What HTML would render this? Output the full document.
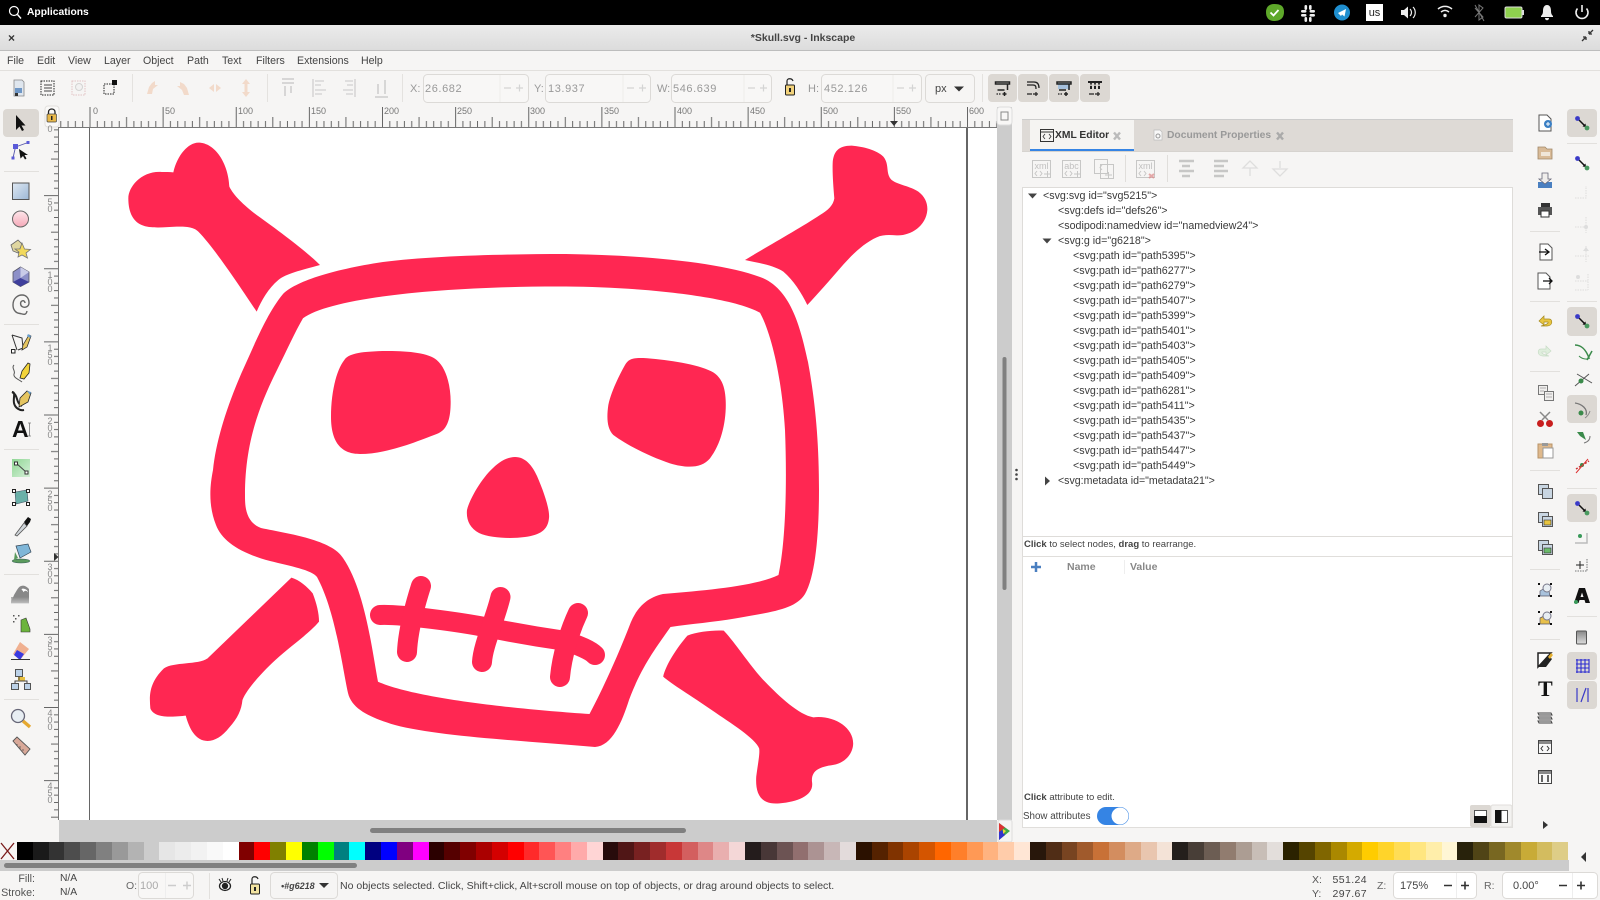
<!DOCTYPE html>
<html style="background:#f6f5f4"><head><meta charset="utf-8"><title>Skull.svg - Inkscape</title>
<style>
html,body{margin:0;padding:0;width:1600px;height:900px;overflow:hidden;background:#f6f5f4;font-family:"Liberation Sans",sans-serif;color:#333}
body{filter:blur(.35px)}
#bg{position:absolute;left:0;top:0}
.t{position:absolute;white-space:nowrap;font-size:11px;line-height:14px;height:14px}
.m{color:#444;font-size:10.6px}
.x{font-size:10.7px;color:#3a3a3a}
.g{color:#999}
.n{letter-spacing:.6px}
.r{font-size:9px;color:#777;line-height:10px;height:10px}
.v{font-size:9px;color:#888;line-height:8px;height:8px;width:8px;text-align:center}
#swatches i{display:block;height:18px;flex:none;width:15.84px}
</style></head><body>
<svg id="bg" width="1600" height="900" viewBox="0 0 1600 900" xmlns="http://www.w3.org/2000/svg">
<defs>
<linearGradient id="title" x1="0" y1="0" x2="0" y2="1"><stop offset="0" stop-color="#ebebeb"/><stop offset="1" stop-color="#dcdcdc"/></linearGradient>
<linearGradient id="gb" x1="0" y1="0" x2="1" y2="1"><stop offset="0" stop-color="#dfe8f2"/><stop offset="1" stop-color="#9db8d6"/></linearGradient>
<linearGradient id="gp" x1="0" y1="0" x2="0" y2="1"><stop offset="0" stop-color="#fde6ea"/><stop offset="1" stop-color="#f5a9b8"/></linearGradient>
<linearGradient id="gw" x1="0" y1="0" x2="0" y2="1"><stop offset="0" stop-color="#888"/><stop offset="1" stop-color="#ddd"/></linearGradient>
<linearGradient id="gr" x1="0" y1="0" x2="1" y2="1"><stop offset="0" stop-color="#8fd694"/><stop offset="1" stop-color="#d6f0d8"/></linearGradient>
<pattern id="hr" patternUnits="userSpaceOnUse" x="89.5" y="107" width="73.125" height="20">
<path d="M.5 0V20M7.8 14V20M15.1 14V20M22.4 14V20M29.75 14V20M37.06 10V20M44.4 14V20M51.7 14V20M59 14V20M66.3 14V20" stroke="#666" stroke-width="1" fill="none"/></pattern>
<pattern id="vr" patternUnits="userSpaceOnUse" x="44" y="122" width="15" height="73.125">
<path d="M0 .5H15M10 7.8H15M10 15.1H15M10 22.4H15M10 29.75H15M7 37.06H15M10 44.4H15M10 51.7H15M10 59H15M10 66.3H15" stroke="#666" stroke-width="1" fill="none"/></pattern>
<g id="snap"><path d="M-4.5-4.5L3 3" stroke="#111" stroke-width="1.5"/><path d="M4 4L.5 3.5 3.5.5Z" fill="#111"/><circle cx="-4.5" cy="-4.5" r="2.4" fill="#3a3ac8"/><circle cx="5" cy="5" r="2.4" fill="#4a9a60"/></g>
<g id="arr2"><path d="M-5 3L2 3M-7-5H7V-3H-7ZM5-3V3" stroke="#222" stroke-width="1.5" fill="none"/><path d="M0 7H4M2 5V9M5 7" stroke="#222" stroke-width="1.5"/><path d="M-6 7H-1" stroke="#222" stroke-width="1.2" stroke-dasharray="1.5 1"/></g>
<g id="file"><path d="M-6-8H2L6-4V8H-6Z" fill="#fff" stroke="#555"/></g>
</defs>

<!-- chrome -->
<rect width="1600" height="25" fill="#000"/>
<rect y="25" width="1600" height="25" fill="url(#title)"/>
<rect y="50" width="1600" height="1" fill="#bdbdbd"/>
<rect y="51" width="1600" height="19" fill="#f6f5f4"/>
<rect y="70" width="1600" height="1" fill="#e2e0dd"/>

<!-- tray -->
<g fill="none" stroke="#fff">
<circle cx="14" cy="11" r="4.5" stroke-width="1.2"/><path d="M17.5 14.5L21 18.5" stroke-width="1.4"/>
</g>
<path d="M1274 4C1281 4 1284 6 1284 12C1284 19 1279 21 1274 21C1269 21 1266 18 1266 12C1266 7 1269 4 1274 4Z" fill="#5ea82a"/>
<path d="M1270.5 12.5L1273.5 15.5 1278.5 10" stroke="#fff" stroke-width="1.8" fill="none"/>
<g fill="#eee"><rect x="1301" y="10" width="5.500" height="2.6" rx="1.2"/><rect x="1309.500" y="10" width="5.500" height="2.6" rx="1.2"/><rect x="1301" y="14" width="5.500" height="2.6" rx="1.2"/><rect x="1309.500" y="14" width="5.500" height="2.6" rx="1.2"/><rect x="1304.5" y="5" width="2.6" height="5" rx="1.2"/><rect x="1309" y="5" width="2.6" height="5" rx="1.2"/><rect x="1304.5" y="17" width="2.6" height="5" rx="1.2"/><rect x="1309" y="17" width="2.6" height="5" rx="1.2"/></g>
<circle cx="1342" cy="12.5" r="8" fill="#1f8fd0"/><path d="M1338 13L1346 9 1344.5 16.5 1342 14.5 1341 16Z" fill="#fff"/>
<rect x="1366" y="4" width="17" height="17" fill="#fff"/>
<path d="M1401 10H1404L1408 6.5V18.5L1404 15H1401Z" fill="#eee"/><path d="M1410 9C1412 11 1412 14 1410 16M1413 7C1416 10 1416 15 1413 18" stroke="#eee" stroke-width="1.2" fill="none"/>
<path d="M1438 9C1442 5.5 1448 5.5 1452 9M1441 12C1443.5 10 1446.5 10 1449 12" stroke="#eee" stroke-width="1.5" fill="none"/><circle cx="1445" cy="15.5" r="1.7" fill="#eee"/>
<path d="M1475 8L1483 17 1479 20V5L1483 8 1475 17M1475 5L1484 21" stroke="#777" stroke-width="1" fill="none"/>
<rect x="1505" y="7" width="17" height="11" rx="1.5" fill="#8fd14f" stroke="#ddd"/><rect x="1522" y="10" width="2" height="5" fill="#ddd"/>
<path d="M1547 5C1550 5 1551 8 1551 11C1551 14 1552 15 1553 16V17H1541V16C1542 15 1543 14 1543 11C1543 8 1544 5 1547 5ZM1545 18H1549C1549 21 1545 21 1545 18Z" fill="#eee"/>
<path d="M1577.5 8.500A6 6 0 1 0 1586.500 8.500" stroke="#eee" stroke-width="1.6" fill="none"/><path d="M1582 5V12" stroke="#eee" stroke-width="1.6"/>
<path d="M1589 34L1593 30M1589 34V31M1589 34H1592M1586 37L1582 41M1586 37V40M1586 37H1583" stroke="#333" stroke-width="1.3" fill="none"/>

<!-- inputs -->
<g fill="#f8f7f6" stroke="#dcdad7">
<rect x="423.500" y="74.500" width="105" height="28" rx="4"/><rect x="545.500" y="74.500" width="105" height="28" rx="4"/><rect x="671.500" y="74.500" width="100" height="28" rx="4"/><rect x="821.500" y="74.500" width="100" height="28" rx="4"/><rect x="925.500" y="74.500" width="49" height="28" rx="4" fill="#f6f5f4"/>
</g>
<path d="M500 75V102M623 75V102M744 75V102M893 75V102" stroke="#eeecea"/>
<path d="M504 88H511M516 88H523M519.500 84.500V91.500M627 88H634M639 88H646M642.500 84.500V91.500M748 88H755M760 88H767M763.500 84.500V91.500M897 88H904M909 88H916M912.500 84.500V91.500" stroke="#d4d4d4" stroke-width="1.2"/>
<path d="M954 86.500H964L959 91.500Z" fill="#333"/>
<path d="M132.500 74V102M267.500 74V102M402.500 74V102M982.500 74V102" stroke="#e4e2df"/>
<!-- toolbar icons -->
<g transform="translate(19 88)"><path d="M-5-8H3L5-6V8H-5Z" fill="#dfe6ee" stroke="#888" stroke-width=".8"/><rect x="-4" y="0" width="7" height="5" fill="#6f97c6"/><rect x="-4" y="5" width="3" height="3" fill="#333"/></g>
<g transform="translate(48 88)"><rect x="-7" y="-7" width="13" height="14" fill="none" stroke="#222" stroke-dasharray="1.5 1"/><path d="M-4-3H4M-4 0H4M-4 3H4" stroke="#444"/></g>
<g transform="translate(79 88)" opacity=".45"><rect x="-7" y="-7" width="13" height="14" fill="none" stroke="#c88" stroke-dasharray="1.5 1"/><circle cx="0" cy="-1" r="3.500" fill="#eee" stroke="#aaa"/></g>
<g transform="translate(110 88)"><rect x="-6" y="-4" width="10" height="10" fill="none" stroke="#222" stroke-dasharray="1.5 1"/><rect x="2" y="-8" width="5" height="5" fill="#111"/></g>
<g opacity=".28" fill="#e8985f"><path d="M147 94L149 87 152 83 155 81V85L158 85 153 89 152 94Z"/><path d="M189 95L187 88 184 84 180 82V86L177 86 182 90 184 95Z"/><path d="M209 88L214 84V92ZM221 88L216 84V92Z"/><path d="M246 79L242 84H250ZM246 97L242 92H250ZM244.500 84H247.500V92H244.500Z"/></g>
<g opacity=".4" stroke="#aaa" stroke-width="2" fill="none"><path d="M282 79H294M282 83H294M285 86V96M291 86V93"/><path d="M313 79V97M315 81H324M315 85H321M315 90H326M315 94H322" stroke-width="1.6"/><path d="M355 79V97M345 81H353M347 85H353M343 90H353M346 94H353" stroke-width="1.6"/><path d="M375 97H388M378 84V94M385 80V94"/></g>
<g transform="translate(790 88)"><path d="M-3-3V-7C-3-10 2-10 3-7" stroke="#222" stroke-width="1.2" fill="none"/><rect x="-4.500" y="-3" width="9" height="10" rx="1" fill="#f2d27a" stroke="#222"/><rect x="-1" y="0" width="2" height="4" fill="#222"/></g>
<g fill="#dcd8d3"><rect x="988" y="74" width="29" height="28" rx="4"/><rect x="1018" y="74" width="30" height="28" rx="4"/><rect x="1049" y="74" width="30" height="28" rx="4"/><rect x="1080" y="74" width="30" height="28" rx="4"/></g>
<use href="#arr2" x="1002.500" y="87"/><g transform="translate(1033 87)"><path d="M-6-5H1C5-5 6-2 6 1M-6-2H0C3-2 3 0 3 2" stroke="#222" stroke-width="1.3" fill="none"/><path d="M-6 7H-1M0 7H5M3 5V9" stroke="#222" stroke-width="1.2"/></g>
<g transform="translate(1064 87)"><rect x="-6" y="-4" width="12" height="6" fill="#a5c0dc"/><use href="#arr2"/></g>
<g transform="translate(1095 87)" fill="#222"><path d="M-7-6H7V-4H-7Z"/><path d="M-5-4H-3L-4-1ZM-1-4H1L0-1ZM3-4H5L4-1Z"/><rect x="-5" y="-1" width="2" height="3"/><rect x="-1" y="-1" width="2" height="3"/><rect x="3" y="-1" width="2" height="3"/><path d="M-6 7H-1M0 7H5M3 5V9" stroke="#222" stroke-width="1.2"/></g>

<!-- rulers -->
<rect x="44" y="106" width="953" height="21" fill="#f6f5f4"/>
<rect x="59" y="107" width="938" height="20" fill="url(#hr)"/>
<rect x="44" y="127" width="15" height="693" fill="url(#vr)"/>
<rect x="59" y="127" width="938" height="1" fill="#777"/>
<rect x="58" y="127" width="1" height="693" fill="#777"/>
<rect x="45" y="106" width="14" height="21" rx="3" fill="#faf9f8" stroke="#e2e0dd"/>
<path d="M48.500 114V112C48.500 108 55 108 55 112V114" stroke="#222" stroke-width="1.300" fill="none"/><rect x="47" y="114" width="9.500" height="8" rx="1" fill="#e8b84a" stroke="#444" stroke-width=".7"/><rect x="51" y="116" width="1.500" height="4" fill="#222"/>
<path d="M890 121H898L894 126Z" fill="#333"/><path d="M54 553V561L58.500 557Z" fill="#333"/>

<!-- canvas -->
<rect x="59" y="128" width="938" height="692" fill="#fff"/>
<rect x="89" y="128" width="1" height="692" fill="#666"/>
<rect x="966" y="128" width="2" height="692" fill="#666"/>

<!-- skull -->
<g fill="#ff2752">
<path fill-rule="evenodd" d="M566 254C640 255 720 262 760 277C790 288 800 325 808 362C815 400 819 440 819 490C819 530 816 575 805 594C795 610 770 612 735 618.500C715 622 690 624 670.500 627C658 645 642 665 629 700C622 722 612 746 595 747C530 741 440 737 395 725C372 718 352 710 348 693C342 665 335 610 317 577C312 570 290 566 270 561C240 553 222 541 216 525C208 505 210 485 213 470C216 440 228 402 246 363C256 341 268 312 283 294C295 282 330 270 383 262C430 256 500 254 566 254Z
M566 286.500C640 287 730 296 760 312.700C772 335 782 380 785 430C787 480 786 540 778.500 575C755 586 710 590 663 594C645 598 635 610 629 627C620 650 605 685 589.500 714C530 710 420 700 378 681.700C372 650 365 590 343 558C332 540 290 534 261 528C245 522 245 505 245 495C245 445 258 408 277 370C287 350 295 332 303 318.300C330 298 440 286 566 286.500Z"/>
<path d="M515 457C525 457 532 465 537 476C544 492 550 510 549 518C548 530 540 535 525 537C510 539 490 538 479 533C470 528 466 520 467 510C470 498 482 478 493 468C500 461 508 457 515 457Z"/>
<g transform="translate(100 130) scale(.33333)">
<path d="M733 690C745 672 775 665 850 663C920 662 985 668 1010 690C1040 715 1052 770 1052 815C1052 860 1045 900 1010 912C950 935 860 972 780 972C730 972 693 945 693 860C693 790 708 722 733 690Z"/>
<path d="M220 127C232 75 265 38 295 38C345 38 385 100 388 170C400 195 430 225 470 255C540 305 620 365 660 405C600 422 560 430 535 450C505 475 485 510 470 545C420 470 340 350 295 305C280 290 255 290 230 290C190 292 150 296 125 285C95 272 85 240 85 205C85 170 125 122 185 126C197 126 210 126 220 127Z"/>
</g>
<g transform="translate(500 130) scale(.33333)">
<path d="M375 705C385 687 400 683 430 684C490 688 580 700 625 720C665 735 675 770 677 810C680 870 665 940 630 985C605 1015 560 1015 510 1000C450 980 380 945 340 915C320 895 320 860 325 825C332 790 355 740 375 705Z"/>
<path d="M735 390C800 350 900 295 960 255C985 240 1000 225 1003 205C1000 170 997 130 998 100C1000 65 1015 47 1055 47C1090 50 1130 60 1150 80C1170 105 1155 130 1175 150C1195 165 1230 168 1255 185C1275 200 1283 220 1282 240C1278 290 1230 318 1190 316C1170 315 1150 313 1130 322C1090 340 1055 375 1020 415C990 450 950 495 922 525C905 490 880 450 850 425C820 405 770 398 735 390Z"/>
</g>
<g transform="translate(130 470) scale(.4847 .33333)">
<path d="M333 323C350 330 365 350 377 370C385 400 390 430 390 455C370 490 330 530 300 570C270 610 240 660 232 690C230 720 222 745 205 772C190 800 175 812 160 813C135 813 122 775 115 737C95 740 50 748 42 715C40 680 38 640 70 595C90 575 140 585 160 565Z"/>
<path d="M1150 497C1170 485 1205 480 1225 482C1250 520 1280 590 1310 635C1340 680 1380 735 1410 742C1450 735 1492 770 1492 820C1492 850 1475 880 1450 885C1425 890 1405 900 1407 935C1412 975 1380 995 1340 1000C1300 1005 1290 970 1292 920C1295 885 1300 850 1298 835C1290 805 1240 760 1200 720C1160 680 1115 640 1100 620C1105 585 1130 530 1150 497Z"/>
</g>
<g fill="none" stroke="#ff2752" stroke-linecap="round" stroke-width="20">
<path d="M380 615C400 614 460 622 490 628C520 634 545 638 566 641C580 646 590 650 595 655"/>
<path d="M421 586C415 605 408 630 407 652"/>
<path d="M500.500 597C495 620 483 645 482 662"/>
<path d="M578 613C570 630 562 655 560 677"/>
</g>
</g>

<!-- scrollbars -->
<rect x="997" y="107" width="15" height="713" fill="#ccc"/>
<rect x="997" y="107" width="15" height="18" rx="3" fill="#f8f7f6" stroke="#ddd"/>
<rect x="1001" y="112" width="7" height="8" fill="none" stroke="#888"/>
<rect x="1002.500" y="357" width="4" height="233" rx="2" fill="#808080"/>
<rect x="59" y="820" width="938" height="22" fill="#ccc"/>
<rect x="370" y="828" width="316" height="5" rx="2.500" fill="#808080"/>
<rect x="998" y="820" width="14" height="22" rx="2" fill="#f6f5f4" stroke="#ddd"/>
<path d="M999 823L1010 831 999 840Z" fill="#3fa84a"/><path d="M999 823L1005 827.500 999 832Z" fill="#d33"/><path d="M999 840L1005 835 1002 830 999 832Z" fill="#33c"/><path d="M1003 829L1006 831 1003 834Z" fill="#f2d33a"/>

<!-- left tools -->
<rect x="3" y="109" width="36" height="28" rx="4" fill="#dcd8d3"/>
<path d="M16 115V130L19.500 126.500 22 131 24 130 21.500 125.500 25.500 125.500Z" fill="#111"/>
<path d="M15.500 147L28 142.500M15.500 147L13 158" stroke="#55a" stroke-width=".9"/><g fill="#5a5ad8"><rect x="26.500" y="141" width="3" height="3"/><rect x="13" y="144" width="5" height="5"/><rect x="11.500" y="156.500" width="3" height="3"/></g>
<path d="M19 149L28 155 24.500 155 26.500 158.500 25 159.500 23 156 20.500 158.500Z" fill="#111"/>
<path d="M4 171.500H39M4 324.500H39M4 449.500H39M4 574.500H39M4 699.500H39" stroke="#e2e0dd"/>
<rect x="12.500" y="183" width="16.500" height="16.500" fill="url(#gb)" stroke="#555" stroke-width="1"/>
<circle cx="20.500" cy="219" r="8" fill="url(#gp)" stroke="#666"/>
<path d="M11 245L18 240 22 244 18 253 13 251Z" fill="#dfd6a0" stroke="#666" stroke-width=".8"/><path d="M22 243L24.500 249 30.500 249.500 26 253 27.500 258 22 255 18 257 19 252 15 249 20 249Z" fill="#f2d95c" stroke="#777" stroke-width=".8"/>
<path d="M20.500 267L29 272V282L20.500 286.500 13 282V272Z" fill="#8d90c8" stroke="#556" stroke-width=".8"/><path d="M20.500 278L29 282 20.500 286.500 13 282Z" fill="#3f3f9c"/><path d="M20.500 267L29 272 20.500 278Z" fill="#c9cbe8"/>
<path d="M27 311C26 316 23 314 20 313.500C15 313 13 309 13 305C13 298 18 295 22 295C27 295 29 299 29 303C29 306 26 308 23 307C20 306 20 302 22 301C24 300 25 302 25 303" fill="none" stroke="#666" stroke-width="1.400"/>
<path d="M12 335L22 338 23 348 18 350M12 335L17 350" fill="none" stroke="#333"/><rect x="11.500" y="349.500" width="3.500" height="3.500" fill="#fff" stroke="#222"/><path d="M23 345L29 335 31 336 27 347 22 350Z" fill="#e5c560" stroke="#222" stroke-width=".7"/><path d="M28 334L31 336 30 338 27 336Z" fill="#6aa0d0"/>
<path d="M14 365C11 368 16 371 14 374C13 378 20 380 22 382" fill="none" stroke="#555"/><path d="M20 378L22 371 28 363 30 364 29 373 24 379Z" fill="#f2d33a" stroke="#222" stroke-width=".8"/>
<path d="M12 392C16 392 13 398 14 403C15 408 20 411 24 410M12 392C19 396 15 402 22 406" fill="none" stroke="#222" stroke-width="2"/><path d="M19 407L20 398 27 391 31 393 28 402Z" fill="#e5c560" stroke="#222" stroke-width=".8"/><path d="M27 391L31 392 30 395Z" fill="#6aa0d0"/>
<path d="M28 423H31M28 436H31M29.500 423V436" stroke="#777" stroke-width=".8"/>
<rect x="12" y="459" width="18" height="18" fill="url(#gr)"/><path d="M16 463L26 472" stroke="#444"/><rect x="14.500" y="462" width="3" height="3" fill="#fff" stroke="#333"/><rect x="25" y="471" width="3" height="3" fill="#fff" stroke="#333"/>
<path d="M15 492L27 490 28 501 16 504Z" fill="#6ab0a8" stroke="#456" stroke-width=".6"/><g fill="#fff" stroke="#222"><rect x="12.500" y="489.500" width="3" height="3"/><rect x="26.500" y="489.500" width="3" height="3"/><rect x="12.500" y="502.500" width="3" height="3"/><rect x="26.500" y="502.500" width="3" height="3"/></g>
<path d="M15 535L24 523 27 526 17 536Z" fill="#d0d5da" stroke="#555" stroke-width=".8"/><path d="M24 522L28 517 31 519 30 522 27 526Z" fill="#111"/>
<path d="M16 546L28 544 31 552 20 558Z" fill="#7fb6d8" stroke="#345" stroke-width=".7"/><ellipse cx="21" cy="561" rx="9" ry="2" fill="#5a9a5c" stroke="#355" stroke-width=".5"/><path d="M15 552L14 560 18 558Z" fill="#5a9a5c"/>
<path d="M11 603H29V589C26 586 24 585 21 586C18 587 16 592 14 595C13 598 11 600 11 603Z" fill="#888"/><path d="M21 589C24 587 29 590 28 593C26 590 24 591 24 593Z" fill="#fff" stroke="#888" stroke-width=".6"/><rect x="11" y="597" width="18" height="7" fill="url(#gw)" opacity=".7"/>
<g fill="#555"><rect x="13" y="615" width="1.500" height="1.500"/><rect x="15" y="618" width="1.500" height="1.500"/><rect x="18" y="615" width="1.500" height="1.500"/><rect x="13" y="621" width="1.500" height="1.500"/></g><path d="M21 620L26 618 30 629V632H21Z" fill="#6cb43c" stroke="#333" stroke-width=".6"/>
<path d="M20 642L29 649 20 660 13 654Z" fill="#f0b090"/><path d="M17 650L24 654 20 660 14 655Z" fill="#3a3ae0"/><path d="M11 659.500H30" stroke="#333"/>
<g fill="#bcd2e8" stroke="#444" stroke-width=".9"><rect x="15.500" y="669.500" width="7" height="7"/><rect x="11.500" y="683.500" width="7" height="6"/><rect x="24.500" y="683.500" width="6" height="6"/></g><rect x="18" y="677" width="7" height="4" fill="#e8c040"/><path d="M19 677V680M15 683V681H27V683" fill="none" stroke="#444"/>
<circle cx="18" cy="716" r="6.500" fill="#e8eef3" stroke="#667" stroke-width="1.300"/><path d="M23 721L30 727" stroke="#e5a830" stroke-width="3.400"/>
<path d="M13 741L17 737 30 749 25 755Z" fill="#d8a898" stroke="#555" stroke-width=".9"/><path d="M17 744V746M20 746V749M23 749V751" stroke="#555" stroke-width=".8"/>

<!-- dock -->
<rect x="1022" y="119" width="491" height="32" fill="#dedad6"/>
<rect x="1022" y="119" width="491" height="1" fill="#ccc"/>
<rect x="1030" y="120" width="104" height="31" fill="#f5f4f2"/>
<rect x="1030" y="149" width="104" height="2" fill="#3584e4"/>
<rect x="1022" y="151" width="491" height="1" fill="#d6d3cf"/>
<rect x="1040.500" y="129.500" width="13" height="12" fill="#f5f4f2" stroke="#333"/><path d="M1041 132H1053" stroke="#333" stroke-width="1"/><path d="M1045 134L1043 136.500 1045 139M1049 134L1051 136.500 1049 139" stroke="#333" fill="none" stroke-width=".8"/>
<path d="M1114 132.500L1120 139.500M1120 132.500L1114 139.500" stroke="#bbb" stroke-width="2.400"/>
<path d="M1277 132.500L1283 139.500M1283 132.500L1277 139.500" stroke="#aaa" stroke-width="2.400"/>
<path d="M1154 130H1160L1162 132V140H1154Z" fill="#f8f8f8" stroke="#bbb" stroke-width=".7"/><circle cx="1158" cy="136" r="2" fill="none" stroke="#999"/>
<rect x="1022.500" y="187.500" width="490" height="349" fill="#fff" stroke="#dedcd9"/>
<rect x="1022.500" y="536.500" width="490" height="20" fill="#fff" stroke="#dedcd9"/>
<rect x="1022.500" y="556.500" width="490" height="271" fill="#fff" stroke="#e0dedb"/>
<path d="M1124.500 560V574" stroke="#eee"/>
<path d="M1036 562V572M1031 567H1041" stroke="#4a7fc0" stroke-width="2.500"/>
<g opacity=".42" fill="none" stroke="#888"><rect x="1032.500" y="160.500" width="18" height="17"/><rect x="1062.500" y="160.500" width="18" height="17"/><rect x="1094.500" y="159.500" width="13" height="14"/><rect x="1100.500" y="164.500" width="13" height="14"/><rect x="1136.500" y="160.500" width="18" height="17"/><path d="M1044 174H1051M1047.500 171V177M1074 174H1081M1077.500 171V177M1105 175H1112M1108.500 172V178"/>
<path d="M1037 171L1035 173.500 1037 176M1040 171L1042 173.500 1040 176M1067 171L1065 173.500 1067 176M1070 171L1072 173.500 1070 176M1141 171L1139 173.500 1141 176M1144 171L1146 173.500 1144 176M1102 165L1100 167.500 1102 170"/>
<g fill="#777" stroke="none" font-size="9" font-family="Liberation Sans, sans-serif" text-anchor="middle"><text x="1041.500" y="169">xml</text><text x="1071.500" y="169">abc</text><text x="1145.500" y="169">xml</text></g>
<path d="M1179 161H1194M1182 166H1190M1179 171H1194M1182 176H1190M1214 161H1228M1214 166H1224M1214 171H1228M1214 176H1224" stroke-width="2.400"/><path d="M1250 161L1243 168H1257ZM1250 168V176M1280 176L1273 169H1287ZM1280 168V161" stroke-width="1.300" opacity=".5"/></g>
<path d="M1125.500 155V182M1167.500 155V182" stroke="#e0dedb"/>
<path d="M1149 174L1154 178M1154 174L1149 178" stroke="#d88" stroke-width="2" opacity=".7"/>
<path d="M1028 193.500H1037L1032.500 198.500ZM1042.500 238.500H1051.500L1047 243.500Z" fill="#444"/>
<path d="M1045 476.500V485.500L1050 481Z" fill="#444"/>
<g fill="#444"><circle cx="1016.500" cy="470" r="1.300"/><circle cx="1016.500" cy="474.500" r="1.300"/><circle cx="1016.500" cy="479" r="1.300"/></g>
<rect x="1097" y="807" width="32" height="18" rx="9" fill="#3584e4"/><circle cx="1120" cy="816" r="8.500" fill="#fff"/>
<rect x="1470" y="805" width="21" height="22" rx="2" fill="#dcd8d3"/><rect x="1491" y="805" width="21" height="22" rx="2" fill="#f3f2f0" stroke="#e0dedb"/>
<rect x="1474.500" y="810.500" width="12" height="12" fill="#fff" stroke="#555"/><rect x="1474" y="816" width="13" height="7" fill="#111"/>
<rect x="1495.500" y="810.500" width="12" height="12" fill="#fff" stroke="#555"/><rect x="1495" y="810" width="6.500" height="13" fill="#111"/>

<!-- right col 1 -->
<g transform="translate(1545 123)"><use href="#file"/><circle cx="3" cy="1" r="4" fill="#3a7fc4"/><path d="M1 1H5M3-1V3" stroke="#fff"/></g>
<g transform="translate(1545 153)"><path d="M-7-6H0L2-4H7V6H-7Z" fill="#d9bb98" stroke="#a08868" stroke-width=".8"/><rect x="-4" y="-1" width="9" height="4" fill="#f0e6d8"/></g>
<g transform="translate(1545 181)"><rect x="-7" y="1" width="14" height="6" fill="#4a7fc0"/><path d="M-3-8H3V-2H6L0 3-6-2H-3Z" fill="#f0eeec" stroke="#667" stroke-width=".8"/></g>
<g transform="translate(1545 210)"><rect x="-7" y="-3" width="14" height="8" fill="#555"/><rect x="-4" y="-7" width="9" height="4" fill="#333"/><rect x="-4" y="1" width="8" height="6" fill="#fff" stroke="#333"/></g>
<g stroke="#e2e0dd"><path d="M1530 231.500H1560M1530 301.500H1560M1530 371.500H1560M1530 470.500H1560M1530 569.500H1560M1530 639.500H1560M1567 143.500H1597M1567 301.500H1597M1567 488.500H1597M1567 616.500H1597"/></g>
<g transform="translate(1546 252)"><use href="#file"/><path d="M-7 0H2M-1-3L3 0-1 3" stroke="#111" stroke-width="1.300" fill="none"/></g>
<g transform="translate(1544 281)"><use href="#file"/><path d="M-1 0H8M5-3L8 0 5 3" stroke="#111" stroke-width="1.300" fill="none"/></g>
<path d="M1539 321L1544 316V319H1549C1553 319 1553 326 1547 326H1541C1544 325 1549 324 1548 322H1544V325Z" fill="#e8c540" stroke="#a58a20" stroke-width=".7"/>
<path d="M1551 351L1546 346V349H1541C1537 349 1537 356 1543 356H1549C1546 355 1541 354 1542 352H1546V355Z" fill="#dfeedd" stroke="#c8dcc6" stroke-width=".7"/>
<g fill="#f0efed" stroke="#777"><rect x="1538.500" y="385.500" width="9" height="9"/><rect x="1544.500" y="391.500" width="9" height="9"/></g><path d="M1540 388H1546M1540 391H1544M1546 394H1552M1546 397H1552" stroke="#999" stroke-width=".8"/>
<path d="M1540 412L1548 420M1550 412L1542 420" stroke="#888" stroke-width="1.500"/><circle cx="1540.500" cy="423.500" r="3.500" fill="#c81e1e"/><circle cx="1549.500" cy="423.500" r="3.500" fill="#c81e1e"/>
<rect x="1538" y="444" width="14" height="14" fill="#dfb98c" stroke="#b89468"/><rect x="1543" y="448" width="10" height="10" fill="#fff" stroke="#999"/><rect x="1542" y="443" width="6" height="3" fill="#999"/>
<g fill="#c9d6e2" stroke="#555"><rect x="1538.500" y="484.500" width="10" height="10"/><rect x="1542.500" y="488.500" width="10" height="10"/></g>
<g stroke="#555"><rect x="1538.500" y="512.500" width="10" height="10" fill="#c9d6e2"/><rect x="1542.500" y="516.500" width="10" height="10" fill="#c9d6e2"/></g><rect x="1544" y="520" width="7" height="5" fill="#e8c540" stroke="#333" stroke-width=".6"/>
<g stroke="#555"><rect x="1538.500" y="540.500" width="10" height="10" fill="#c9d6e2"/><rect x="1542.500" y="544.500" width="10" height="10" fill="#c9d6e2"/></g><rect x="1544" y="548" width="7" height="5" fill="#6bbb6b" stroke="#333" stroke-width=".6"/>
<g transform="translate(1545 590)"><path d="M-5 1L3-4 5 6-5 6Z" fill="#a9c2dc" stroke="#556" stroke-width=".7"/><circle cx="2" cy="-2" r="4" fill="#e8eef3" stroke="#778"/><g fill="#111"><rect x="-7" y="-7" width="2" height="2"/><rect x="5" y="-7" width="2" height="2"/><rect x="-7" y="5" width="2" height="2"/><rect x="5" y="5" width="2" height="2"/></g></g>
<g transform="translate(1545 618)"><path d="M-5 0L3-4 5 6-5 6Z" fill="#e8c04a" stroke="#556" stroke-width=".7"/><circle cx="2" cy="-2" r="4" fill="#e8eef3" stroke="#778"/><g fill="#111"><rect x="-7" y="-7" width="2" height="2"/><rect x="5" y="-7" width="2" height="2"/><rect x="-7" y="5" width="2" height="2"/><rect x="5" y="5" width="2" height="2"/></g></g>
<g transform="translate(1545 660)"><path d="M-7-7H6L-7 7Z" fill="#fff" stroke="#222" stroke-width="1.500"/><path d="M-7 7H1L7-1 3-5Z" fill="#222"/><path d="M3-3L6-7 8-5 5-1Z" fill="#e5b030"/></g>
<g transform="translate(1545 718)" fill="#eee" stroke="#444"><path d="M-7-5H6L7-3H-6Z"/><path d="M-7-1H6L7 1H-6Z"/><path d="M-7 3H6L7 5H-6Z"/></g>
<g transform="translate(1545 747)"><rect x="-6.500" y="-6.500" width="13" height="13" fill="#f8f8f8" stroke="#444"/><rect x="-6" y="-6" width="12" height="3" fill="#888"/><path d="M-2-1L-4 1.500-2 4M2-1L4 1.500 2 4" stroke="#333" fill="none"/></g>
<g transform="translate(1545 777)"><rect x="-6.500" y="-6.500" width="13" height="13" fill="#f8f8f8" stroke="#444"/><rect x="-6" y="-6" width="12" height="3" fill="#888"/><path d="M-3-2V5M3-2V5" stroke="#333" stroke-width="1.500"/></g>
<path d="M1543 821V829L1548 825Z" fill="#333"/>

<!-- right col 2 -->
<g fill="#dcd8d3"><rect x="1567" y="109" width="30" height="28" rx="4"/><rect x="1567" y="307" width="30" height="29" rx="4"/><rect x="1567" y="395" width="30" height="28" rx="4"/><rect x="1567" y="494" width="30" height="28" rx="4"/><rect x="1567" y="652" width="30" height="28" rx="4"/><rect x="1567" y="681" width="30" height="28" rx="4"/></g>
<use href="#snap" x="1582" y="123"/><use href="#snap" x="1582" y="163"/><use href="#snap" x="1582" y="321"/><use href="#snap" x="1582" y="508"/>
<g stroke="#ddd" fill="none" stroke-dasharray="1.500 1"><path d="M1575 198H1586V186M1575 227H1587M1586 217V233M1575 256H1590M1586 246V262M1575 281H1588M1588 274V290M1575 290H1588"/></g>
<circle cx="1586" cy="227" r="2" fill="#ddd"/><path d="M1586 247L1589 251H1583Z" fill="#ddd"/><circle cx="1578" cy="277" r="2" fill="#ddd"/>
<path d="M1575 345C1582 345 1586 350 1589 358" stroke="#3a8a4a" stroke-width="1.500" fill="none"/><path d="M1587 360L1592 351" stroke="#3a8a4a" stroke-width="1.500"/><path d="M1579 356C1582 359 1587 360 1590 358" stroke="#3a8a4a" fill="none"/>
<path d="M1575 386L1589 374M1577 374L1592 383" stroke="#555"/><circle cx="1581" cy="381" r="2.500" fill="#3a8a4a"/>
<path d="M1575 403C1582 404 1588 409 1586 415" stroke="#777" stroke-width="1.300" fill="none"/><circle cx="1581" cy="413" r="2.500" fill="#3a8a4a"/><path d="M1585 418C1588 416 1589 414 1590 411" stroke="#888" fill="none"/>
<path d="M1577 432H1583L1586 440 1580 436Z" fill="#3a8a4a"/><path d="M1584 443C1588 442 1590 440 1590 436" stroke="#777" fill="none"/>
<path d="M1576 469L1589 461" stroke="#c33" stroke-width="1.500" stroke-dasharray="2 1.500"/><circle cx="1582" cy="465" r="2" fill="#3a8a4a"/><path d="M1576 473L1588 459" stroke="#d33" stroke-width="1"/>
<path d="M1575 543H1587V533" stroke="#bbb" stroke-width="1.500" fill="none"/><circle cx="1580" cy="536" r="2" fill="#3a9a5a"/>
<path d="M1575 571H1587M1587 559V571" stroke="#777" stroke-dasharray="1.500 1" fill="none"/><path d="M1576 565H1584M1580 561V569" stroke="#222"/>
<path fill-rule="evenodd" d="M1579 588H1585L1590 603H1585.500L1584.500 600H1579.500L1578.500 603H1574ZM1582 592.500L1580.500 597H1583.500Z" fill="#111"/><circle cx="1576" cy="602" r="2" fill="#3a9a5a"/>
<rect x="1576.500" y="631" width="10" height="13" rx="1" fill="url(#gw)" stroke="#555"/>
<path d="M1576 660H1589M1576 664H1589M1576 668H1589M1576 672H1589M1577 659V673M1581 659V673M1585 659V673M1589 659V673" stroke="#2a2ad0" stroke-width="1.100"/>
<path d="M1577 688V702M1586 688L1581 702M1588 688V702" stroke="#3a3ac8" stroke-width="1.200"/>

<!-- palette start -->
<path d="M1 843L14 859M14 843L1 859" stroke="#7a1a1a" stroke-width="1.300"/>
</svg>

<!-- palette -->
<div style="position:absolute;left:17px;top:842px;height:18px;display:flex" id="swatches">
<i style="background:#000"></i><i style="background:#1a1a1a"></i><i style="background:#333"></i><i style="background:#4d4d4d"></i><i style="background:#666"></i><i style="background:#808080"></i><i style="background:#999"></i><i style="background:#b3b3b3"></i><i style="background:#ccc"></i><i style="background:#e6e6e6"></i><i style="background:#ececec"></i><i style="background:#f2f2f2"></i><i style="background:#f9f9f9"></i><i style="background:#fff"></i>
<i style="background:#800000"></i><i style="background:#f00"></i><i style="background:#808000"></i><i style="background:#ff0"></i><i style="background:#008000"></i><i style="background:#0f0"></i><i style="background:#008080"></i><i style="background:#0ff"></i><i style="background:#000080"></i><i style="background:#00f"></i><i style="background:#800080"></i><i style="background:#f0f"></i>
<i style="background:#2b0000"></i><i style="background:#500"></i><i style="background:#800000"></i><i style="background:#a00"></i><i style="background:#d40000"></i><i style="background:#f00"></i><i style="background:#ff2a2a"></i><i style="background:#f55"></i><i style="background:#ff8080"></i><i style="background:#faa"></i><i style="background:#ffd5d5"></i>
<i style="background:#280b0b"></i><i style="background:#501616"></i><i style="background:#782121"></i><i style="background:#a02c2c"></i><i style="background:#c83737"></i><i style="background:#d35f5f"></i><i style="background:#de8787"></i><i style="background:#e9afaf"></i><i style="background:#f4d7d7"></i>
<i style="background:#241c1c"></i><i style="background:#483737"></i><i style="background:#6c5353"></i><i style="background:#916f6f"></i><i style="background:#ac9393"></i><i style="background:#c8b7b7"></i><i style="background:#e3dbdb"></i>
<i style="background:#2b1100"></i><i style="background:#520"></i><i style="background:#803300"></i><i style="background:#a40"></i><i style="background:#d45500"></i><i style="background:#f60"></i><i style="background:#ff7f2a"></i><i style="background:#f95"></i><i style="background:#ffb380"></i><i style="background:#fca"></i><i style="background:#ffe6d5"></i>
<i style="background:#28170b"></i><i style="background:#502d16"></i><i style="background:#784421"></i><i style="background:#a05a2c"></i><i style="background:#c87137"></i><i style="background:#d38d5f"></i><i style="background:#deaa87"></i><i style="background:#e9c6af"></i><i style="background:#f4e3d7"></i>
<i style="background:#241f1c"></i><i style="background:#483e37"></i><i style="background:#6c5d53"></i><i style="background:#917c6f"></i><i style="background:#ac9d93"></i><i style="background:#c8beb7"></i><i style="background:#e3dedb"></i>
<i style="background:#2b2200"></i><i style="background:#540"></i><i style="background:#806600"></i><i style="background:#a80"></i><i style="background:#d4aa00"></i><i style="background:#fc0"></i><i style="background:#ffd42a"></i><i style="background:#fd5"></i><i style="background:#ffe680"></i><i style="background:#fea"></i><i style="background:#fff6d5"></i>
<i style="background:#28220b"></i><i style="background:#504416"></i><i style="background:#786721"></i><i style="background:#a0892c"></i><i style="background:#c8ab37"></i><i style="background:#d3bc5f"></i><i style="background:#decd87"></i>
</div>
<div style="position:absolute;left:0;top:860px;width:1569px;height:11px;background:#ccc"></div>
<div style="position:absolute;left:4px;top:863px;width:353px;height:5px;border-radius:3px;background:#808080"></div>
<svg style="position:absolute;left:1578px;top:850px" width="12" height="14"><path d="M8 2V12L3 7Z" fill="#333"/></svg>

<!-- status widgets -->
<svg style="position:absolute;left:0;top:871px" width="1600" height="29">
<rect x="138.500" y="1.500" width="55" height="26" rx="4" fill="#f8f7f6" stroke="#dcdad7"/><path d="M168 14.500H176M183 14.500H191M187 10.500V18.500" stroke="#ccc" stroke-width="1.400"/><path d="M165.500 2V27" stroke="#eee"/>
<path d="M209.500 2V28" stroke="#e2e0dd"/>
<g transform="translate(225 14)"><ellipse cx="0" cy="1" rx="5.500" ry="4.500" fill="#fff" stroke="#222" stroke-width="1.300"/><circle cx="0" cy="1" r="3.200" fill="#222"/><path d="M-4-3L-6-6M-2-4L-3-7M2-4L3-7M4-3L6-6" stroke="#222"/></g>
<g transform="translate(255 14)"><path d="M-3-1V-6C-3-9 2-9 3-6" stroke="#222" stroke-width="1.200" fill="none"/><rect x="-4.500" y="-1" width="9" height="10" rx="1" fill="#f2e3a0" stroke="#222"/><rect x="-1" y="2" width="2" height="4" fill="#222"/></g>
<rect x="270.500" y="1.500" width="67" height="26" rx="4" fill="#f6f5f4" stroke="#dcdad7"/>
<path d="M319 12H329L324 17Z" fill="#333"/>
<rect x="1393.500" y="1.500" width="83" height="26" rx="4" fill="#fff" stroke="#dcdad7"/><path d="M1456.500 2V27" stroke="#eee"/><path d="M1444 14.500H1452M1461 14.500H1469M1465 10.500V18.500" stroke="#333" stroke-width="1.600"/>
<rect x="1502.500" y="1.500" width="95" height="26" rx="4" fill="#fff" stroke="#dcdad7"/><path d="M1572.500 2V27" stroke="#eee"/><path d="M1559 14.500H1567M1577 14.500H1585M1581 10.500V18.500" stroke="#333" stroke-width="1.600"/>
</svg>

<!-- top text -->
<div class="t" style="left:27px;top:6px;color:#fff;font-weight:bold;font-size:10.300px">Applications</div>
<div class="t" style="left:1368px;top:6px;width:13px;color:#222;font-size:11px;text-align:center">us</div>
<div class="t" style="left:8px;top:31px;font-weight:bold;font-size:12px;color:#333">×</div>
<div class="t" style="left:700px;width:200px;text-align:center;top:31px;font-weight:bold;color:#444;font-size:10.500px;padding-left:3px">*Skull.svg - Inkscape</div>
<!-- menu -->
<div class="t m" style="left:7px;top:54px">File</div><div class="t m" style="left:37px;top:54px">Edit</div><div class="t m" style="left:68px;top:54px">View</div><div class="t m" style="left:104px;top:54px">Layer</div><div class="t m" style="left:143px;top:54px">Object</div><div class="t m" style="left:187px;top:54px">Path</div><div class="t m" style="left:222px;top:54px">Text</div><div class="t m" style="left:256px;top:54px">Filters</div><div class="t m" style="left:297px;top:54px">Extensions</div><div class="t m" style="left:361px;top:54px">Help</div>
<!-- toolbar text -->
<div class="t g" style="left:410px;top:82px">X:</div><div class="t g n" style="left:425px;top:82px">26.682</div>
<div class="t g" style="left:534px;top:82px">Y:</div><div class="t g n" style="left:548px;top:82px">13.937</div>
<div class="t g" style="left:657px;top:82px">W:</div><div class="t g n" style="left:673px;top:82px">546.639</div>
<div class="t g" style="left:808px;top:82px">H:</div><div class="t g n" style="left:824px;top:82px">452.126</div>
<div class="t" style="left:935px;top:82px;color:#444">px</div>
<!-- h ruler labels -->
<div class="t r" style="left:93px;top:106px">0</div><div class="t r" style="left:165px;top:106px">50</div><div class="t r" style="left:238px;top:106px">100</div><div class="t r" style="left:311px;top:106px">150</div><div class="t r" style="left:384px;top:106px">200</div><div class="t r" style="left:457px;top:106px">250</div><div class="t r" style="left:530px;top:106px">300</div><div class="t r" style="left:604px;top:106px">350</div><div class="t r" style="left:677px;top:106px">400</div><div class="t r" style="left:750px;top:106px">450</div><div class="t r" style="left:823px;top:106px">500</div><div class="t r" style="left:896px;top:106px">550</div><div class="t r" style="left:969px;top:106px">600</div>
<!-- v ruler labels -->
<div class="t v" style="left:46px;top:125px">0</div>
<div class="t v" style="left:46px;top:198px">5</div><div class="t v" style="left:46px;top:205px">0</div>
<div class="t v" style="left:46px;top:271px">1</div><div class="t v" style="left:46px;top:278px">0</div><div class="t v" style="left:46px;top:285px">0</div>
<div class="t v" style="left:46px;top:344px">1</div><div class="t v" style="left:46px;top:351px">5</div><div class="t v" style="left:46px;top:358px">0</div>
<div class="t v" style="left:46px;top:417px">2</div><div class="t v" style="left:46px;top:424px">0</div><div class="t v" style="left:46px;top:431px">0</div>
<div class="t v" style="left:46px;top:490px">2</div><div class="t v" style="left:46px;top:497px">5</div><div class="t v" style="left:46px;top:504px">0</div>
<div class="t v" style="left:46px;top:563px">3</div><div class="t v" style="left:46px;top:570px">0</div><div class="t v" style="left:46px;top:577px">0</div>
<div class="t v" style="left:46px;top:636px">3</div><div class="t v" style="left:46px;top:643px">5</div><div class="t v" style="left:46px;top:650px">0</div>
<div class="t v" style="left:46px;top:709px">4</div><div class="t v" style="left:46px;top:716px">0</div><div class="t v" style="left:46px;top:723px">0</div>
<div class="t v" style="left:46px;top:782px">4</div><div class="t v" style="left:46px;top:789px">5</div><div class="t v" style="left:46px;top:796px">0</div>
<!-- tool letters -->
<div class="t" style="left:12px;top:417px;height:24px;line-height:24px;font-size:23px;font-weight:bold;color:#111">A</div>
<div class="t" style="left:1538px;top:677px;height:24px;line-height:24px;font-size:22px;font-weight:bold;font-family:'Liberation Serif',serif;color:#111">T</div>
<!-- dock text -->
<div class="t" style="left:1055px;top:129px;font-weight:bold;color:#333;font-size:10.300px">XML Editor</div>
<div class="t" style="left:1167px;top:129px;font-weight:bold;color:#999;font-size:10.300px">Document Properties</div>
<div class="t x" style="left:1043px;top:189px">&lt;svg:svg id="svg5215"&gt;</div>
<div class="t x" style="left:1058px;top:204px">&lt;svg:defs id="defs26"&gt;</div>
<div class="t x" style="left:1058px;top:219px">&lt;sodipodi:namedview id="namedview24"&gt;</div>
<div class="t x" style="left:1058px;top:234px">&lt;svg:g id="g6218"&gt;</div>
<div class="t x" style="left:1073px;top:249px">&lt;svg:path id="path5395"&gt;</div>
<div class="t x" style="left:1073px;top:264px">&lt;svg:path id="path6277"&gt;</div>
<div class="t x" style="left:1073px;top:279px">&lt;svg:path id="path6279"&gt;</div>
<div class="t x" style="left:1073px;top:294px">&lt;svg:path id="path5407"&gt;</div>
<div class="t x" style="left:1073px;top:309px">&lt;svg:path id="path5399"&gt;</div>
<div class="t x" style="left:1073px;top:324px">&lt;svg:path id="path5401"&gt;</div>
<div class="t x" style="left:1073px;top:339px">&lt;svg:path id="path5403"&gt;</div>
<div class="t x" style="left:1073px;top:354px">&lt;svg:path id="path5405"&gt;</div>
<div class="t x" style="left:1073px;top:369px">&lt;svg:path id="path5409"&gt;</div>
<div class="t x" style="left:1073px;top:384px">&lt;svg:path id="path6281"&gt;</div>
<div class="t x" style="left:1073px;top:399px">&lt;svg:path id="path5411"&gt;</div>
<div class="t x" style="left:1073px;top:414px">&lt;svg:path id="path5435"&gt;</div>
<div class="t x" style="left:1073px;top:429px">&lt;svg:path id="path5437"&gt;</div>
<div class="t x" style="left:1073px;top:444px">&lt;svg:path id="path5447"&gt;</div>
<div class="t x" style="left:1073px;top:459px">&lt;svg:path id="path5449"&gt;</div>
<div class="t x" style="left:1058px;top:474px;font-size:10.600px">&lt;svg:metadata id="metadata21"&gt;</div>
<div class="t" style="left:1024px;top:538px;font-size:9.500px;color:#444"><b>Click</b> to select nodes, <b>drag</b> to rearrange.</div>
<div class="t" style="left:1067px;top:560px;font-size:10.500px;font-weight:bold;color:#888">Name</div>
<div class="t" style="left:1130px;top:560px;font-size:10.500px;font-weight:bold;color:#888">Value</div>
<div class="t" style="left:1024px;top:791px;font-size:9.500px;color:#444"><b>Click</b> attribute to edit.</div>
<div class="t" style="left:1023px;top:810px;font-size:9.800px;color:#444">Show attributes</div>
<!-- status text -->
<div class="t" style="left:0;width:35px;text-align:right;top:872px;font-size:10.700px;color:#555">Fill:</div>
<div class="t" style="left:0;width:35px;text-align:right;top:886px;font-size:10.700px;color:#555">Stroke:</div>
<div class="t" style="left:60px;top:872px;font-size:10.300px;color:#444">N/A</div>
<div class="t" style="left:60px;top:886px;font-size:10.300px;color:#444">N/A</div>
<div class="t" style="left:126px;top:879px;font-size:10.500px;color:#666">O:</div>
<div class="t g" style="left:140px;top:879px;color:#aaa">100</div>
<div class="t" style="left:281px;top:879px;font-size:9px;font-weight:bold;font-style:italic;color:#444">•#g6218</div>
<div class="t" style="left:340px;top:879px;font-size:10.550px;color:#444">No objects selected. Click, Shift+click, Alt+scroll mouse on top of objects, or drag around objects to select.</div>
<div class="t" style="left:1312px;top:873px;font-size:10.500px;color:#555">X:</div>
<div class="t" style="left:1312px;top:887px;font-size:10.500px;color:#555">Y:</div>
<div class="t" style="left:1327px;width:40px;text-align:right;top:873px;font-size:10.500px;color:#444;letter-spacing:.4px">551.24</div>
<div class="t" style="left:1327px;width:40px;text-align:right;top:887px;font-size:10.500px;color:#444;letter-spacing:.4px">297.67</div>
<div class="t" style="left:1377px;top:879px;font-size:10.500px;color:#666">Z:</div>
<div class="t" style="left:1400px;top:879px;color:#444">175%</div>
<div class="t" style="left:1484px;top:879px;font-size:10.500px;color:#666">R:</div>
<div class="t" style="left:1513px;top:879px;color:#444">0.00°</div>
</body></html>
